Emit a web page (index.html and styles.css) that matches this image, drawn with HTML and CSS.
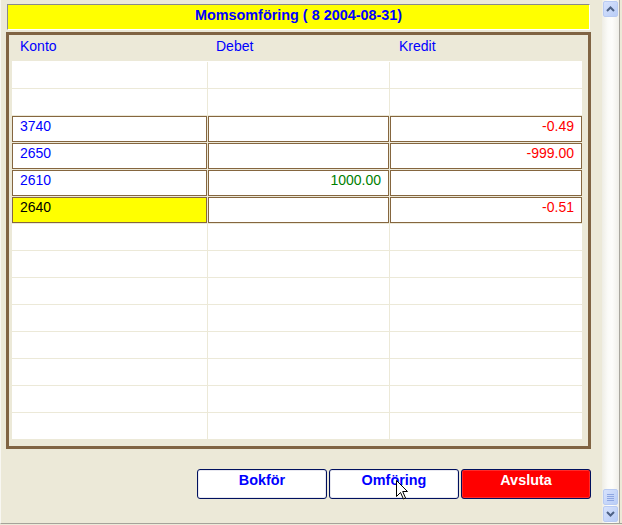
FILE: index.html
```html
<!DOCTYPE html>
<html>
<head>
<meta charset="utf-8">
<link rel="stylesheet" href="styles.css">
</head>
<body>
<div class="window">
  <div class="content">
    <div class="title">Momsomföring ( 8 2004-08-31)</div>
    <div class="frame">
      <div class="head"><span>Konto</span><span>Debet</span><span>Kredit</span></div>
      <div class="grid">
        <div class="cell"></div><div class="cell"></div><div class="cell"></div>
        <div class="cell"></div><div class="cell"></div><div class="cell"></div>
        <div class="cell box acct">3740</div><div class="cell box"></div><div class="cell box num credit">-0.49</div>
        <div class="cell box acct">2650</div><div class="cell box"></div><div class="cell box num credit">-999.00</div>
        <div class="cell box acct">2610</div><div class="cell box num debit">1000.00</div><div class="cell box"></div>
        <div class="cell box acct active">2640</div><div class="cell box"></div><div class="cell box num credit">-0.51</div>
        <div class="cell"></div><div class="cell"></div><div class="cell"></div>
        <div class="cell"></div><div class="cell"></div><div class="cell"></div>
        <div class="cell"></div><div class="cell"></div><div class="cell"></div>
        <div class="cell"></div><div class="cell"></div><div class="cell"></div>
        <div class="cell"></div><div class="cell"></div><div class="cell"></div>
        <div class="cell"></div><div class="cell"></div><div class="cell"></div>
        <div class="cell"></div><div class="cell"></div><div class="cell"></div>
        <div class="cell"></div><div class="cell"></div><div class="cell"></div>
      </div>
    </div>
    <div class="actions">
      <button class="btn">Bokför</button>
      <button class="btn hover">Omföring<svg class="cursor" width="12" height="20" viewBox="0 0 12 20"><path d="M0.5 0.5 L0.5 16.5 L4.5 12.5 L7.5 19 L9.5 18 L6.7 11.5 L11.5 11.5 Z" fill="#fff" stroke="#000" stroke-width="1"/></svg></button>
      <button class="btn danger">Avsluta</button>
    </div>
  </div>
  <div class="scrollbar">
    <div class="sbtn"><svg width="9" height="6" viewBox="0 0 9 6"><path d="M1 5 L4.5 1.5 L8 5" fill="none" stroke="#4d6185" stroke-width="2"/></svg></div>
    <div class="track"></div>
    <div class="sbtn thumb"><span></span><span></span><span></span><span></span></div>
    <div class="sbtn down"><svg width="9" height="6" viewBox="0 0 9 6"><path d="M1 1 L4.5 4.5 L8 1" fill="none" stroke="#4d6185" stroke-width="2"/></svg></div>
  </div>
</div>
</body>
</html>
```

FILE: styles.css
```css
html, body {
  margin: 0;
  padding: 0;
}
body {
  width: 622px;
  height: 525px;
  background: #ece9d8;
  font-family: "Liberation Sans", Arial, sans-serif;
  font-size: 14px;
  overflow: hidden;
}
.window {
  display: flex;
  height: 523px;
  border-bottom: 1px solid #a5a39a;
  border-left: 1px solid #f8f7f2;
}
.content {
  width: 601px;
  display: flex;
  flex-direction: column;
}
.title {
  margin: 4px 12px 0 6px;
  height: 22px;
  border-top: 1px solid #8a8a8a;
  border-left: 1px solid #8a8a8a;
  border-bottom: 1px solid #ffffff;
  border-right: 1px solid #ffffff;
  background: #ffff00;
  color: #0000ff;
  font-weight: bold;
  font-size: 14.4px;
  line-height: 16px;
  text-align: center;
  padding-top: 2px;
  box-sizing: content-box;
}
.frame {
  margin: 2px 0 0 5px;
  width: 570px;
  border: 3px solid #806443;
  padding: 0 6px 7px 3px;
}
.head {
  display: grid;
  grid-template-columns: 195px 181px 192px;
  column-gap: 1px;
  height: 23px;
  padding-top: 3px;
  line-height: 16px;
  color: #0000ff;
}
.head span {
  padding-left: 8px;
}
.head span:last-child {
  padding-left: 9px;
}
.grid {
  display: grid;
  grid-template-columns: 195px 181px 192px;
  grid-auto-rows: 26px;
  gap: 1px;
  background: #ece9d8;
  border-top: 1px solid #ffffff;
}
.cell {
  background: #ffffff;
  line-height: 16px;
}
.box {
  border: 1px solid #85663f;
  padding: 1px 7px 0 7px;
}
.acct {
  color: #0000ff;
}
.active {
  background: #ffff00;
  color: #000000;
}
.num {
  text-align: right;
}
.credit {
  color: #ff0000;
}
.debit {
  color: #008000;
}
.actions {
  display: flex;
  justify-content: flex-end;
  gap: 2px;
  margin-top: 20px;
  margin-right: 11px;
}
.btn {
  position: relative;
  width: 130px;
  height: 30px;
  border: 1px solid #00105e;
  border-radius: 3px;
  background: #ffffff;
  box-shadow: inset 0 0 0 1px #e8e8f0;
  color: #0000ff;
  font-family: "Liberation Sans", Arial, sans-serif;
  font-weight: bold;
  font-size: 14.4px;
  line-height: 16px;
  padding: 2px 0 0 0;
  display: flex;
  justify-content: center;
  align-items: flex-start;
}
.btn.danger {
  background: #ff0000;
  color: #ffffff;
  box-shadow: inset 0 0 0 1px #ff2a2a;
}
.cursor {
  position: absolute;
  left: 66px;
  top: 10px;
}
.scrollbar {
  width: 17px;
  display: flex;
  flex-direction: column;
  align-items: center;
  background: linear-gradient(to right, #eeede5, #fbfbf8 35%, #fdfdfb 60%, #f0efe9);
  border-right: 1px solid #a9a79f;
  margin-right: 2px;
  padding-top: 1px;
}
.sbtn {
  width: 13px;
  height: 14px;
  border: 1px solid #b9cbf3;
  border-radius: 2px;
  background: linear-gradient(to bottom right, #d7e2fc, #b9cdf7);
  display: flex;
  align-items: center;
  justify-content: center;
}
.track {
  flex: 1;
}
.thumb {
  flex-direction: column;
  gap: 1px;
  margin-bottom: 1px;
}
.thumb span {
  display: block;
  width: 7px;
  height: 1px;
  background: #8ea6e2;
}
.down {
  margin-bottom: 1px;
}
```
